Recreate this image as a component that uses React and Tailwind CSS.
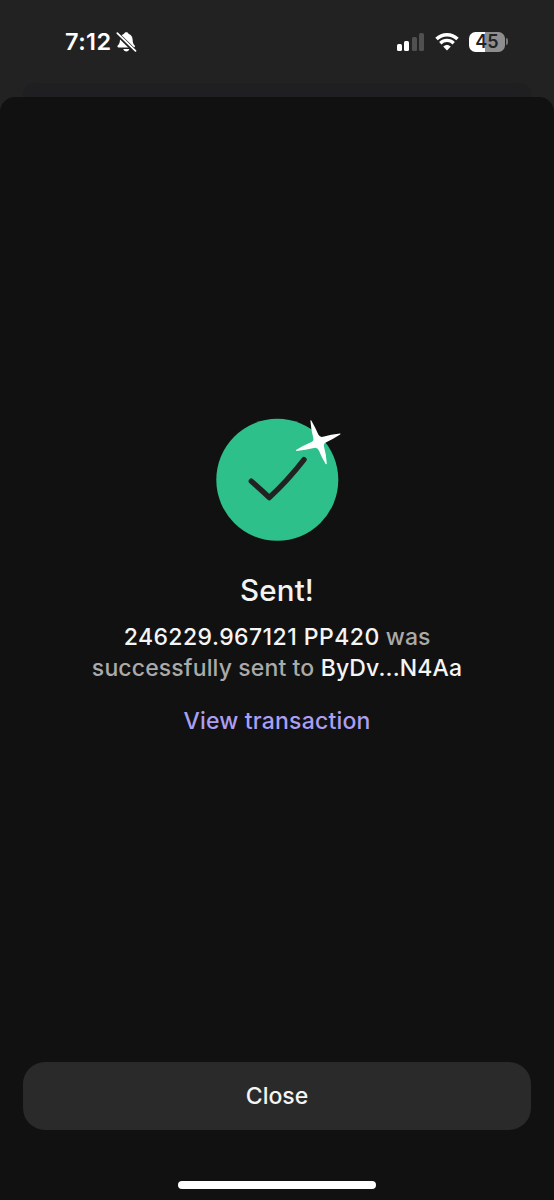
import clsx from 'clsx';

const transfer = { amount: '246229.967121', token: 'PP420', recipient: 'ByDv...N4Aa' };

function StatusBar() {
  return (
    <div className="flex h-[83px] justify-between pl-[65px] pr-[46px] text-white">
      <div className="flex h-[83px] items-center gap-[5px]">
        <span className="text-[23.5px] font-semibold leading-none tracking-[0.4px]">7:12</span>
        <BellOff />
      </div>
      <div className="flex h-[83px] items-center">
        <Signal />
        <Wifi />
        <Battery level="45" />
      </div>
    </div>
  );
}

function BellOff() {
  return (
    <svg className="h-[22px] w-[21px]" viewBox="0 0 21 22">
      <path d="M10.3 1.2c1.3 0 2 .7 2.2 1.6 2.8.9 3.9 3 4.1 5.6.2 3.4.7 4.8 2.1 6.2.6.7.2 2-.9 2H2.6c-1.1 0-1.5-1.3-.9-2 1.5-1.6 2.1-2.9 2.3-6.2.2-2.6 1.3-4.7 4.1-5.6.2-.9.9-1.6 2.2-1.6z" fill="white" />
      <path d="M7.3 17.9h6c-.3 1.5-1.5 2.5-3 2.5s-2.7-1-3-2.5z" fill="white" />
      <path d="M.8 2.4 19.3 20.4" stroke="#222" strokeWidth="4.2" />
      <path d="M1.3 2.2 19.5 19.9" stroke="white" strokeWidth="1.8" strokeLinecap="round" />
    </svg>
  );
}

function Signal() {
  return (
    <div className="flex h-[18px] items-end gap-[2.5px]">
      {[7, 10, 14, 18].map((h, i) => (
        <span key={h} className={clsx('w-[5px] rounded-[1.5px]', i < 2 ? 'bg-white' : 'bg-[#505050]')} style={{ height: h }} />
      ))}
    </div>
  );
}

function Wifi() {
  return (
    <svg className="ml-[11px] h-[18px] w-6" viewBox="0 0 24 18" fill="none" stroke="white">
      <path d="M1.5 6.1C7.4.3 16.6.3 22.5 6.1" strokeWidth="3.5" />
      <path d="M5.3 10.2C9.1 6.5 14.9 6.5 18.7 10.2" strokeWidth="3.3" />
      <path d="M8.2 13.6c2.2-2.1 5.4-2.1 7.6 0L12 17.5z" fill="white" stroke="none" />
    </svg>
  );
}

function Battery({ level }) {
  return (
    <div className="ml-[10px] flex items-center gap-px">
      <div className="flex h-5 w-9 items-center justify-center rounded-[6.5px] bg-linear-to-r from-white from-45% to-[#8e8e8e] to-45% text-[18px] font-semibold leading-none text-[#222]">
        {level}
      </div>
      <span className="h-[7px] w-[2px] rounded-r-full bg-[#777]" />
    </div>
  );
}

function SuccessIcon() {
  return (
    <svg className="h-[130px] w-[130px]" viewBox="0 0 130 130">
      <circle cx="65.3" cy="64.8" r="61" fill="#2ec08b" />
      <path d="M39.3 66.2Q50 75.5 57.3 82.6Q75 66.5 92 44.7" fill="none" stroke="#222" strokeWidth="5.4" strokeLinecap="round" strokeLinejoin="round" />
      <path d="M98.4 5.6Q98.7 4.7 99.3 5.6Q103.5 13 106.3 19.5Q107.6 22.6 111 21.8Q119 19.4 128 18.5Q129 18.8 128.2 19.4Q121 24 113.8 27.4Q111.2 28.7 112 31.5Q114.2 39.5 114.8 48.6Q114.3 50 113.5 48.7Q109.5 42 106.9 35.4Q105.5 32.3 102 33Q93.5 35.1 84.5 35.9Q83.5 35.5 84.4 34.8Q91.5 30.4 99.5 27Q102.2 25.8 101.2 22.8Q99 14.5 98.4 5.6Z" fill="white" />
    </svg>
  );
}

export default function App() {
  const { amount, token, recipient } = transfer;

  return (
    <div className="flex h-[1200px] w-[554px] flex-col overflow-hidden bg-[#222222] font-['Inter','Liberation_Sans',sans-serif]">
      <StatusBar />
      <div className="mx-[23px] h-[14px] shrink-0 rounded-t-[12px] bg-[#1f1f21]" />

      <div className="flex flex-1 flex-col rounded-t-[15px] bg-[#111111]">
        <main className="flex flex-1 flex-col items-center pt-[318px] text-center font-medium">
          <SuccessIcon />
          <h1 className="mt-[26px] text-[29.5px] font-medium leading-[38px] tracking-[0.15px] text-[#f3f3f3]">Sent!</h1>
          <p className="mt-[13px] text-[23px] leading-[31px] text-[#aaaaaa]">
            <span className="tracking-[0.45px] text-[#f5f5f5]">{amount} {token}</span> was
            <br />
            <span className="tracking-[0.13px]">successfully sent to <span className="text-[#f5f5f5]">{recipient}</span></span>
          </p>
          <button className="mt-[22px] text-[23px] leading-[31px] tracking-[0.2px] text-[#ab9ff2]">View transaction</button>
        </main>

        <footer className="flex flex-col items-center px-[23px] pb-[11px]">
          <button className="h-[68px] w-full rounded-[22px] bg-[#2a2a2a] pt-px text-[23px] font-medium text-[#f5f5f5]">Close</button>
          <div className="mt-[51px] h-[8px] w-[198px] rounded-full bg-white" />
        </footer>
      </div>
    </div>
  );
}
